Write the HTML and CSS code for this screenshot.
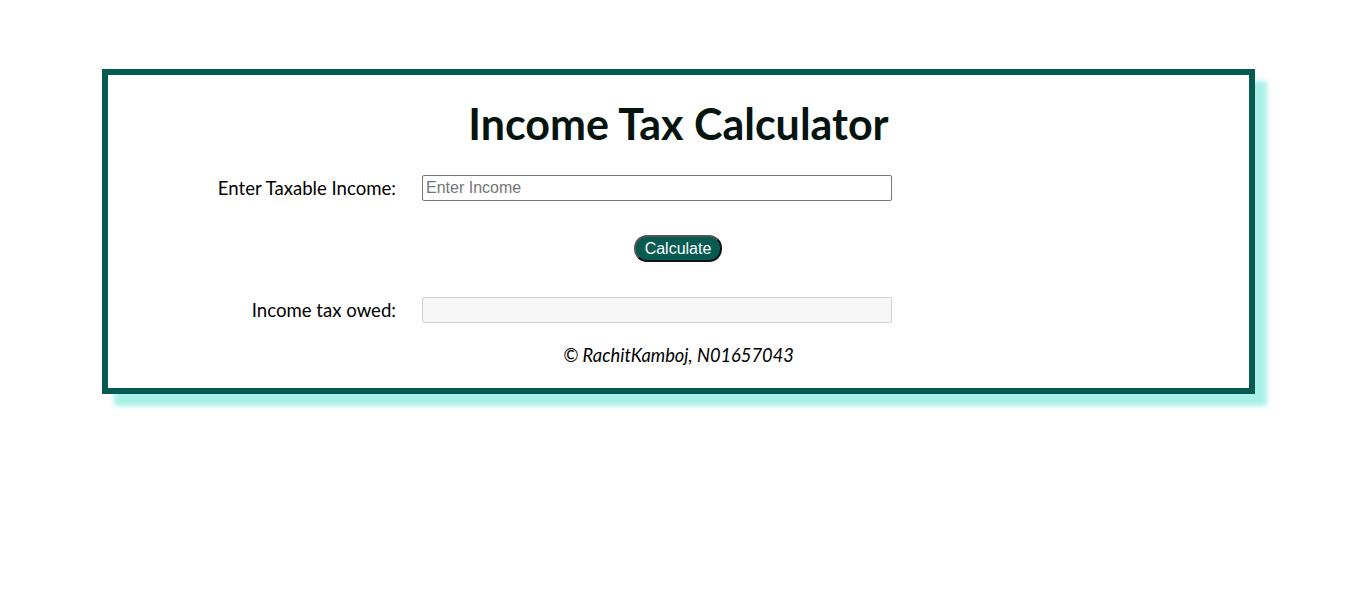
FILE: index.html
```html
<!DOCTYPE html>
<html>
<head>
<meta charset="utf-8">
<link rel="stylesheet" href="styles.css">
</head>
<body>
<div class="card">
  <h1 class="title">Income Tax Calculator</h1>
  <div class="row">
    <label class="label" for="income">Enter Taxable Income:</label>
    <input class="field" id="income" type="text" placeholder="Enter Income">
  </div>
  <div class="btn-row">
    <button class="btn">Calculate</button>
  </div>
  <div class="row">
    <label class="label" for="owed">Income tax owed:</label>
    <input class="field field-out" id="owed" type="text" disabled>
  </div>
  <p class="footer">© RachitKamboj, N01657043</p>
</div>
</body>
</html>
```
FILE: styles.css
```css
html, body {
  min-height: 100%;
}
body {
  margin: 8px;
  padding-bottom: 200px;
  background: #ffffff;
  font-family: Lato, "Open Sans", sans-serif;
}
.card {
  box-sizing: border-box;
  width: 1153px;
  margin: 61px 0 0 94px;
  border: 6px solid #055a52;
  box-shadow: 12px 12px 5px #a9f0e8;
  padding: 22px 0 21px;
  background: #fff;
}
.title {
  margin: 0 0 24px;
  text-align: center;
  font-size: 43px;
  line-height: 54px;
  font-weight: 700;
  color: #06140f;
}
.row {
  display: flex;
  align-items: center;
  gap: 26px;
}
.label {
  width: 288px;
  text-align: right;
  font-size: 18.6px;
  color: #000;
}
.field {
  box-sizing: border-box;
  width: 470px;
  height: 26px;
  margin: 0;
  border: 1px solid #767676;
  border-radius: 2px;
  padding: 1px 3px;
  font-family: "Liberation Sans", Arial, sans-serif;
  font-size: 16px;
}
.field::placeholder {
  color: #757575;
}
.field-out {
  background: #f7f7f7;
  border-color: #cfcfcf;
}
.btn-row {
  display: flex;
  justify-content: center;
  padding: 34px 0 35px;
}
.btn {
  box-sizing: border-box;
  width: 88px;
  height: 27px;
  margin-left: -1px;
  border: 2px solid #111;
  border-top-color: #555;
  border-left-color: #555;
  border-radius: 13px;
  background: #055a52;
  color: #fff;
  font-family: "Liberation Sans", Arial, sans-serif;
  font-size: 16px;
  padding: 0;
}
.footer {
  margin: 20px 0 0;
  text-align: center;
  font-style: italic;
  font-size: 18.3px;
  line-height: 24px;
  color: #000;
}
```
